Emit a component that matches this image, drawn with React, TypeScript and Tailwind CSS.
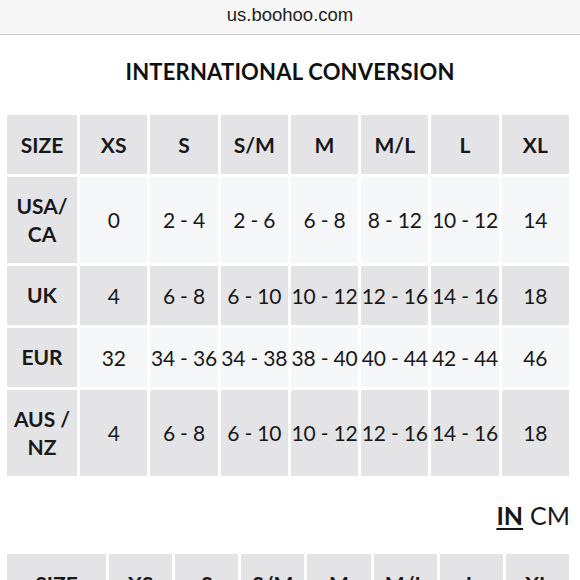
import React from "react";

const cols = ["XS", "S", "S/M", "M", "M/L", "L", "XL"];
const rows: { label: string[]; vals: string[]; light: boolean; h: string }[] = [
  { label: ["USA/", "CA"], vals: ["0", "2 - 4", "2 - 6", "6 - 8", "8 - 12", "10 - 12", "14"], light: true, h: "h-[86px]" },
  { label: ["UK"], vals: ["4", "6 - 8", "6 - 10", "10 - 12", "12 - 16", "14 - 16", "18"], light: false, h: "h-[59px]" },
  { label: ["EUR"], vals: ["32", "34 - 36", "34 - 38", "38 - 40", "40 - 44", "42 - 44", "46"], light: true, h: "h-[59px]" },
  { label: ["AUS /", "NZ"], vals: ["4", "6 - 8", "6 - 10", "10 - 12", "12 - 16", "14 - 16", "18"], light: false, h: "h-[86px]" },
];

const gray = "bg-[#e4e4e6]";
const light = "bg-[#f6f7f8]";

export default function App() {
  return (
    <div className="w-[580px] h-[580px] overflow-hidden bg-white text-[#181818]" style={{ fontFamily: "Lato, 'Noto Sans', sans-serif" }}>
      <div className="h-[35px] bg-[#f7f7f7] border-b border-[#c9c9c9] flex items-center justify-center">
        <span className="text-[18.5px] leading-none text-[#222] pb-[3px]" style={{ fontFamily: "'Liberation Sans', Arial, sans-serif" }}>
          us.boohoo.com
        </span>
      </div>
      <h1 className="mt-[24px] text-center font-bold text-[22px] leading-[26px] tracking-[0.2px] text-[#111]">INTERNATIONAL CONVERSION</h1>
      <div className="mt-[30px] ml-[7px] w-[562px] grid grid-cols-[70px_repeat(7,1fr)] gap-[3px] text-[21px]">
        <div className={`${gray} h-[59px] flex items-center justify-center font-bold`}>SIZE</div>
        {cols.map((c) => (
          <div key={c} className={`${gray} h-[59px] flex items-center justify-center font-bold`}>{c}</div>
        ))}
        {rows.map((r, i) => (
          <React.Fragment key={i}>
            <div className={`${gray} ${r.h} flex flex-col items-center justify-center font-bold leading-[28px] pb-[1px]`}>
              {r.label.map((l) => (
                <span key={l}>{l}</span>
              ))}
            </div>
            {r.vals.map((v, j) => (
              <div key={j} className={`${r.light ? light : gray} ${r.h} flex items-center justify-center whitespace-nowrap tracking-[-0.2px]`}>
                {v}
              </div>
            ))}
          </React.Fragment>
        ))}
      </div>
      <div className="mt-[24px] pr-[10px] flex justify-end text-[25px] leading-[30px]">
        <span className="font-bold underline underline-offset-[3px] decoration-[2px]">IN</span>
        <span className="ml-[7px]">CM</span>
      </div>
      <div className="mt-[24px] ml-[7px] w-[562px] grid grid-cols-[99px_repeat(7,1fr)] gap-[3px] text-[21px]">
        <div className={`${gray} h-[59px] flex items-center justify-center font-bold`}>SIZE</div>
        {cols.map((c) => (
          <div key={c} className={`${gray} h-[59px] flex items-center justify-center font-bold`}>{c}</div>
        ))}
      </div>
    </div>
  );
}
